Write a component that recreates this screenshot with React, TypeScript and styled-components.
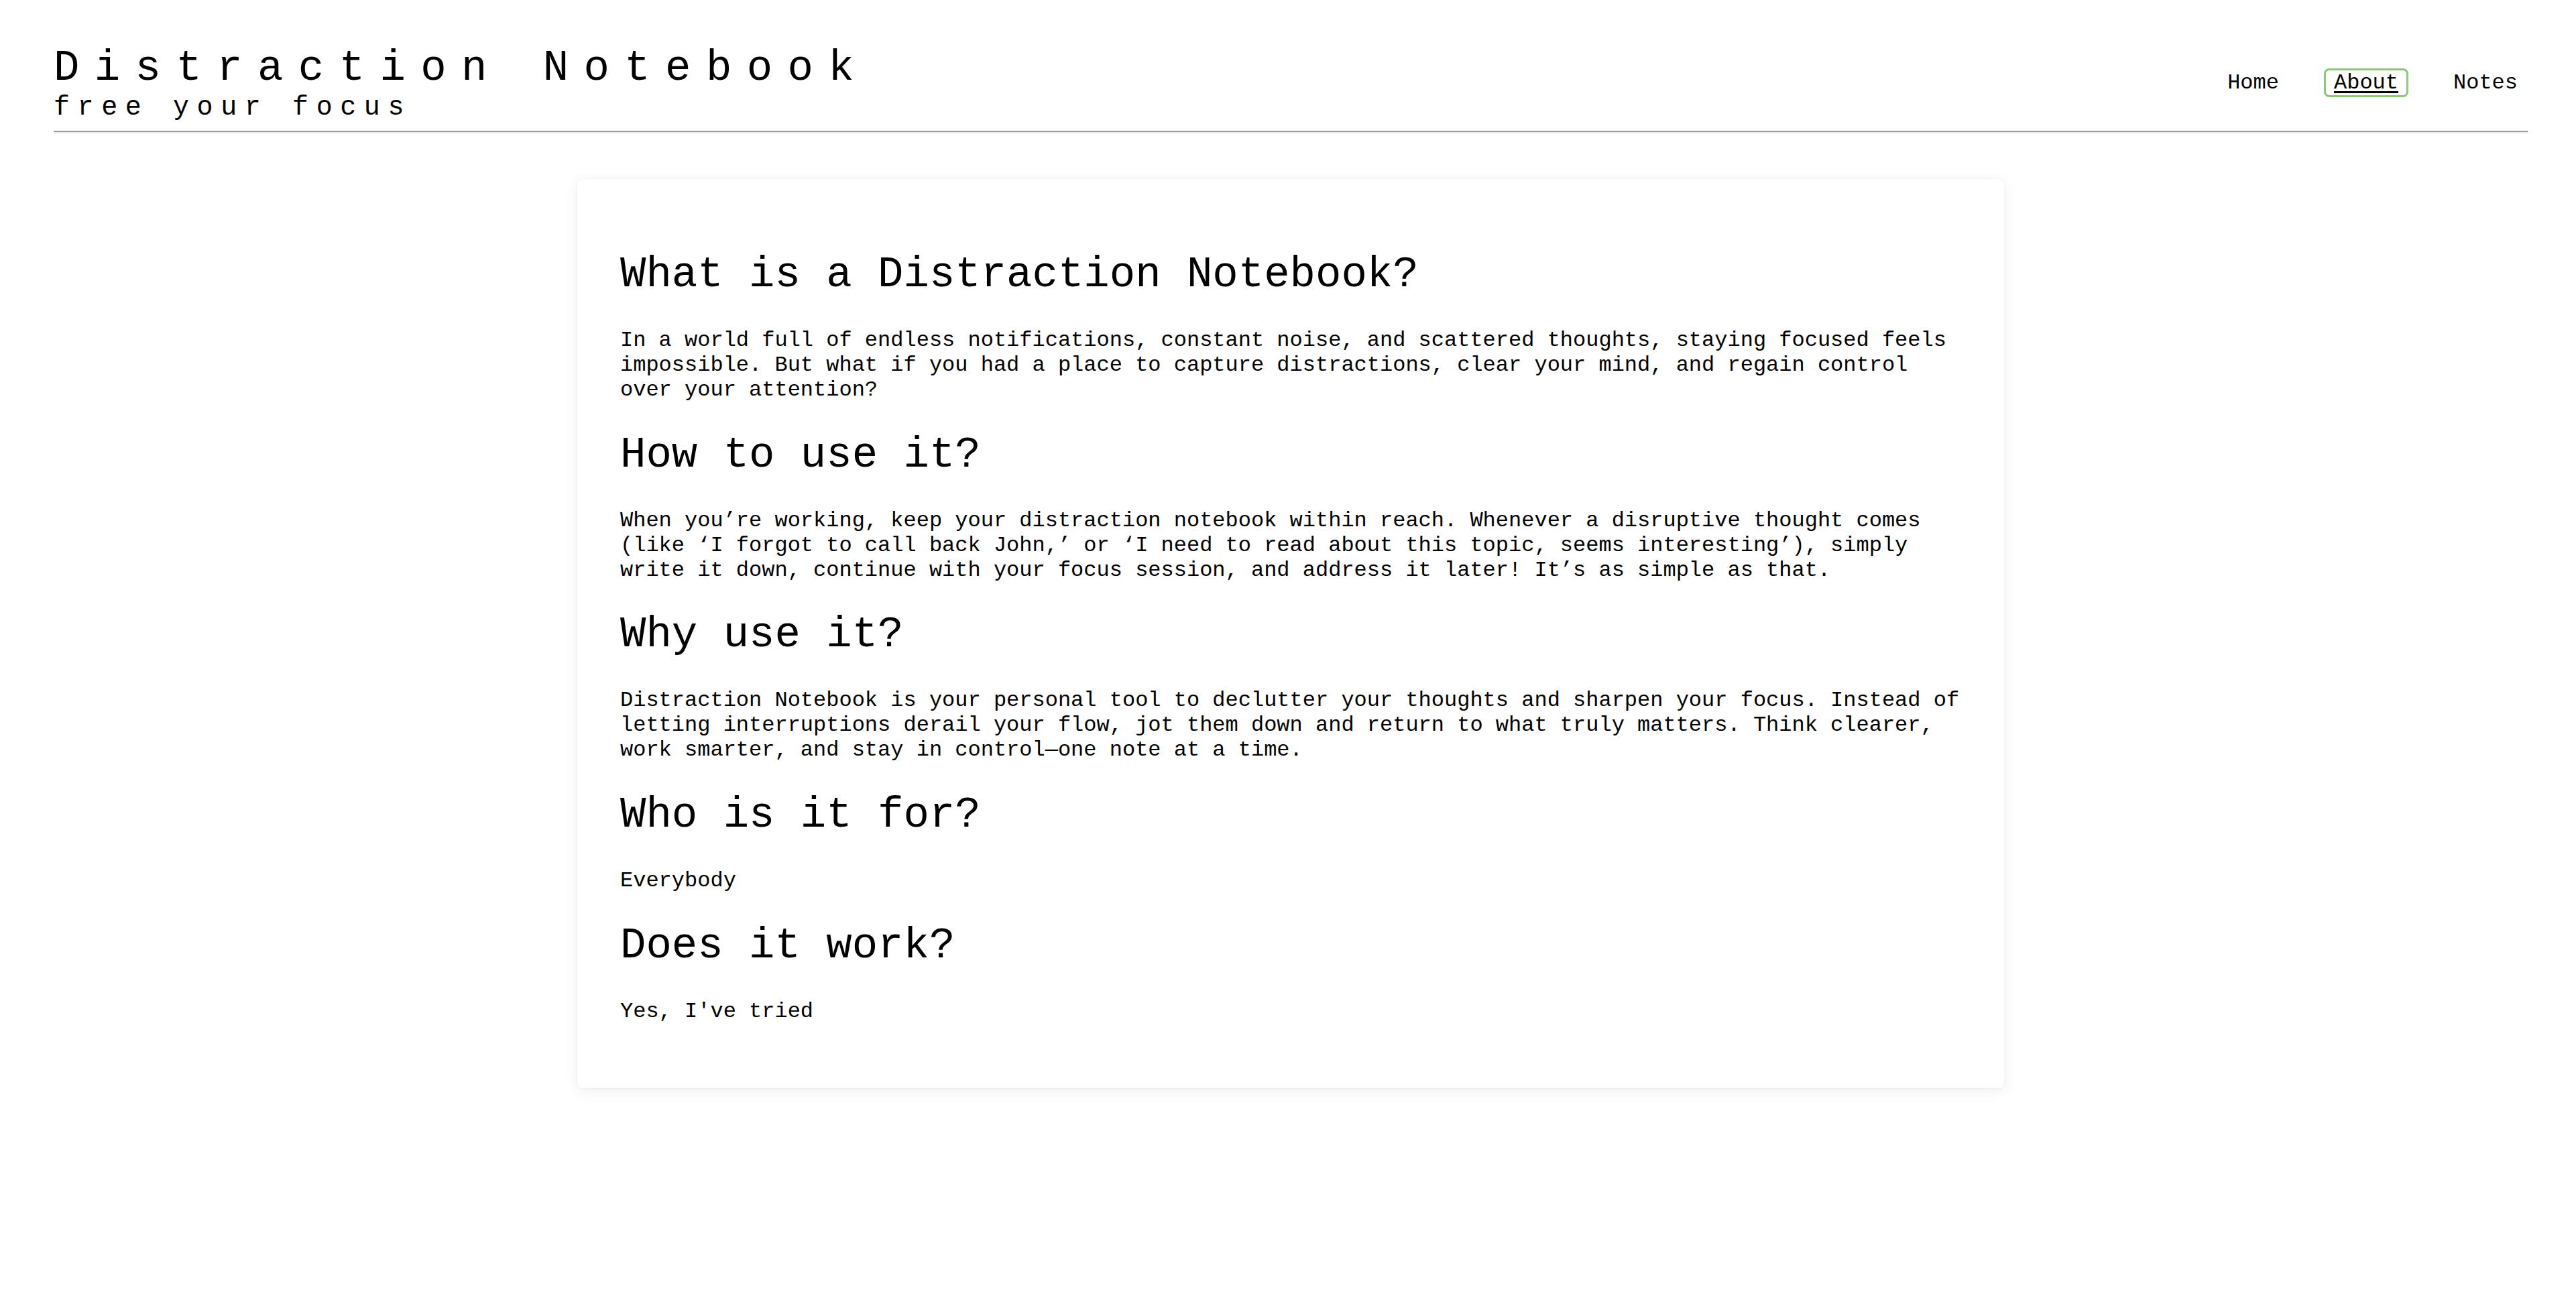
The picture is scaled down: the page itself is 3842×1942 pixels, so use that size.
import React from "react";
import styled, { createGlobalStyle } from "styled-components";

const GlobalStyle = createGlobalStyle`
  html, body {
    margin: 0;
    padding: 0;
    background: #ffffff;
  }
  body {
    font-family: "Liberation Mono", "Courier New", monospace;
    color: #000000;
  }
  * { box-sizing: border-box; }
`;

const Page = styled.div`
  padding: 0 72px 0 80px;
  min-height: 1942px;
`;

const Header = styled.header`
  display: flex;
  justify-content: space-between;
  align-items: center;
  padding: 66px 0 12px;
  border-bottom: 2px solid #9d9d9d;
  box-shadow: 0 2px 0 #ededed;
`;

const Brand = styled.div`
  display: flex;
  flex-direction: column;
`;

const Title = styled.h1`
  margin: 0;
  font-size: 64px;
  font-weight: normal;
  letter-spacing: 22.4px;
  line-height: normal;
`;

const Tagline = styled.p`
  margin: 0;
  font-size: 40px;
  letter-spacing: 11.6px;
  line-height: normal;
`;

const Nav = styled.nav`
  display: flex;
  align-items: center;
  gap: 52px;
  margin-top: -2px;
`;

const NavLink = styled.a<{ $active?: boolean }>`
  font-size: 32px;
  line-height: normal;
  color: #000;
  padding: 0 12px;
  border: 3px solid ${(p) => (p.$active ? "#8cc87b" : "transparent")};
  border-radius: 8px;
  text-decoration: ${(p) => (p.$active ? "underline" : "none")};
  text-decoration-thickness: 3px;
  text-underline-offset: 4px;
  cursor: pointer;
`;

const Main = styled.main`
  display: flex;
  justify-content: center;
  padding-top: 70px;
`;

const Card = styled.article`
  width: 2128px;
  background: #ffffff;
  border-radius: 8px;
  padding: 64px;
  box-shadow: 0 4px 22px rgba(0, 0, 0, 0.07), 0 0 3px rgba(0, 0, 0, 0.06);
`;

const Heading = styled.h1`
  font-size: 64px;
  font-weight: normal;
  line-height: normal;
  margin: 42.88px 0;
`;

const Paragraph = styled.p`
  font-size: 32px;
  line-height: normal;
  margin: 32px 0;
`;

const sections: { title: string; body: string }[] = [
  {
    title: "What is a Distraction Notebook?",
    body:
      "In a world full of endless notifications, constant noise, and scattered thoughts, staying focused feels impossible. But what if you had a place to capture distractions, clear your mind, and regain control over your attention?",
  },
  {
    title: "How to use it?",
    body:
      "When you\u2019re working, keep your distraction notebook within reach. Whenever a disruptive thought comes (like \u2018I forgot to call back John,\u2019 or \u2018I need to read about this topic, seems interesting\u2019), simply write it down, continue with your focus session, and address it later! It\u2019s as simple as that.",
  },
  {
    title: "Why use it?",
    body:
      "Distraction Notebook is your personal tool to declutter your thoughts and sharpen your focus. Instead of letting interruptions derail your flow, jot them down and return to what truly matters. Think clearer, work smarter, and stay in control\u2014one note at a time.",
  },
  { title: "Who is it for?", body: "Everybody" },
  { title: "Does it work?", body: "Yes, I've tried" },
];

export default function App() {
  return (
    <>
      <GlobalStyle />
      <Page>
        <Header>
          <Brand>
            <Title>Distraction Notebook</Title>
            <Tagline>free your focus</Tagline>
          </Brand>
          <Nav>
            <NavLink>Home</NavLink>
            <NavLink $active>About</NavLink>
            <NavLink>Notes</NavLink>
          </Nav>
        </Header>
        <Main>
          <Card>
            {sections.map((s) => (
              <section key={s.title}>
                <Heading>{s.title}</Heading>
                <Paragraph>{s.body}</Paragraph>
              </section>
            ))}
          </Card>
        </Main>
      </Page>
    </>
  );
}
